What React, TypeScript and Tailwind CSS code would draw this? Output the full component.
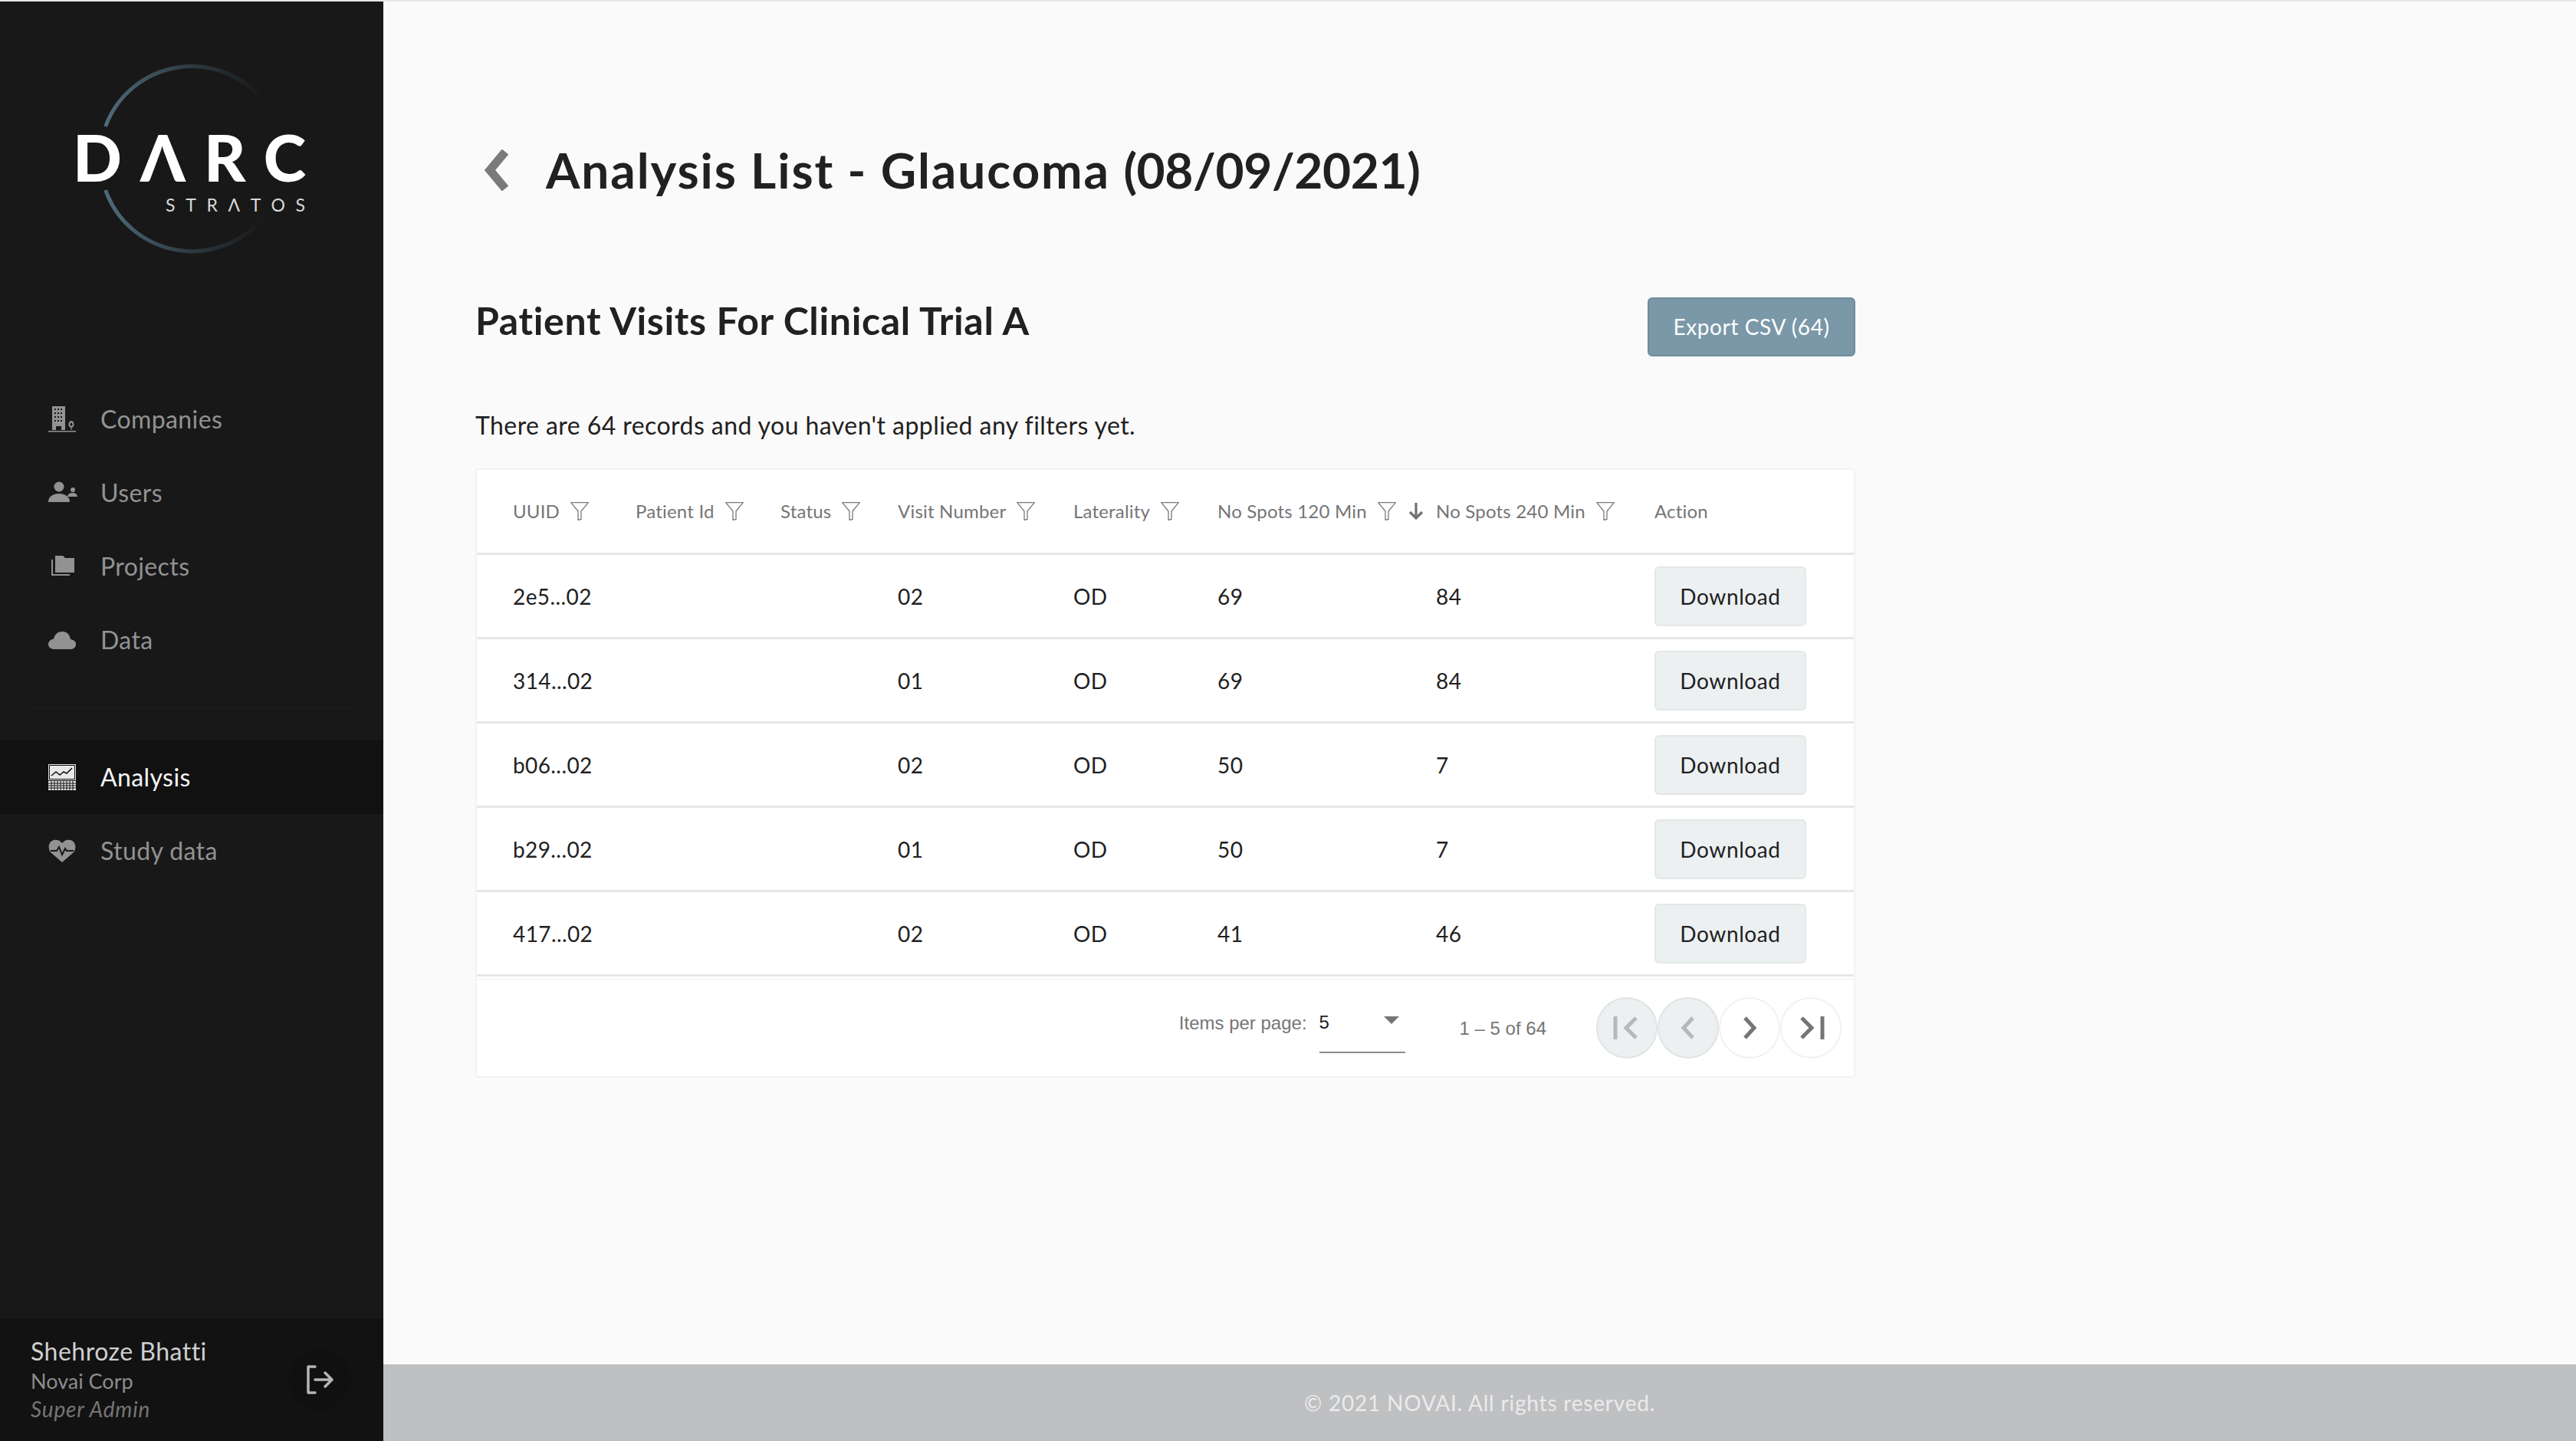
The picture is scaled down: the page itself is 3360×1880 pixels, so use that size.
import type { ReactNode } from "react";

const columns = "grid grid-cols-[160px_189px_153px_229px_188px_285px_285px_1fr] items-center pl-[47px]";

const rows = [
  ["2e5...02", "", "", "02", "OD", "69", "84"],
  ["314...02", "", "", "01", "OD", "69", "84"],
  ["b06...02", "", "", "02", "OD", "50", "7"],
  ["b29...02", "", "", "01", "OD", "50", "7"],
  ["417...02", "", "", "02", "OD", "41", "46"],
];

function Logo() {
  return (
    <svg width="500" height="340" viewBox="0 0 500 340">
      <defs>
        <linearGradient id="arc" gradientUnits="userSpaceOnUse" x1="137" y1="0" x2="345" y2="0">
          <stop offset="0" stopColor="#4f6b7a" />
          <stop offset="0.5" stopColor="#2f3d45" />
          <stop offset="1" stopColor="#181818" />
        </linearGradient>
      </defs>
      <path d="M137.6 163 A120 120 0 0 1 345 131" fill="none" stroke="url(#arc)" strokeWidth="5" />
      <path d="M137.6 246 A120 120 0 0 0 345 280" fill="none" stroke="url(#arc)" strokeWidth="5" />
      <text x="95" y="235" textLength="304" lengthAdjust="spacing" fill="#fff" fontFamily="Lato, sans-serif" fontWeight="900" fontSize="84">
        DΛRC
      </text>
      <text x="216" y="274" textLength="182" lengthAdjust="spacing" fill="#d8d8d8" fontFamily="Lato, sans-serif" fontSize="23">
        STRΛTOS
      </text>
    </svg>
  );
}

function BuildingIcon() {
  return (
    <svg width="36" height="36" viewBox="0 0 36 36" fill="currentColor">
      <path fillRule="evenodd" d="M5 1h17v31h-5v-5h-7v5H5zM8 4v2h2V4zm4 0v2h2V4zm4 0v2h2V4zM8 9v2h2V9zm4 0v2h2V9zm4 0v2h2V9zM8 14v2h2v-2zm4 0v2h2v-2zm4 0v2h2v-2zM8 19v2h2v-2zm4 0v2h2v-2zm4 0v2h2v-2z" />
      <path fillRule="evenodd" d="M30 20c2.500 0 3.500 3 3.500 5 0 2.200-1.500 3.600-2.900 3.900V32h-1.200v-3.100C28 28.600 26.500 27.200 26.500 25c0-2 1-5 3.500-5zm0 2.500c-1 0-1.500 1.500-1.500 2.500s.7 1.700 1.500 1.700 1.500-.7 1.500-1.700-.5-2.500-1.500-2.500z" />
      <rect x="0" y="33" width="36" height="1.500" />
    </svg>
  );
}

function UsersIcon() {
  return (
    <svg width="38" height="36" viewBox="0 0 38 36" fill="currentColor">
      <circle cx="14" cy="10" r="6.500" />
      <path d="M0 30c0-7 6-11 14-11s14 4 14 11z" />
      <circle cx="32" cy="14" r="3" />
      <path d="M25 23c0-3 3-5 6.500-5s6.500 2 6.500 5z" />
    </svg>
  );
}

function FoldersIcon() {
  return (
    <svg width="36" height="36" viewBox="0 0 36 36" fill="currentColor">
      <path d="M9 4h10l3 3h12v19H9z" />
      <path d="M4 9v21h24v-2H6V9z" />
    </svg>
  );
}

function CloudIcon() {
  return (
    <svg width="36" height="36" viewBox="0 0 36 36" fill="currentColor">
      <path d="M8 30c-4.500 0-8-2.500-8-6.500S3.500 17 7 16.500C8.500 10 13 7 18 7c5 0 9 2.500 10.500 8 .1 1 .2 1.500.2 2 4 .5 7.300 2.500 7.300 6.500 0 4-3 6.500-7 6.500z" />
    </svg>
  );
}

function AnalysisIcon() {
  return (
    <svg width="36" height="36" viewBox="0 0 36 36" fill="none">
      <rect x="0" y="1" width="36" height="21" fill="#e8e8e8" />
      <rect x="1.500" y="2.500" width="33" height="18" fill="none" stroke="#111" strokeWidth="1" />
      <path d="M4 16l6-5 5 4 5-4 4 2 7-7" stroke="#111" strokeWidth="1.500" />
      <path d="M0 23h36v12H0z" fill="#e8e8e8" />
      <path d="M0 26h36M0 29h36M0 32h36M4 23v12M8 23v12M12 23v12M16 23v12M20 23v12M24 23v12M28 23v12M32 23v12" stroke="#111" strokeWidth="1" />
    </svg>
  );
}

function HeartIcon() {
  return (
    <svg width="36" height="36" viewBox="0 0 36 36" fill="currentColor">
      <path d="M18 33L3 20C-1 15 0 6 7 4c4-1 8 0 11 4 3-4 7-5 11-4 7 2 8 11 4 16z" />
      <path d="M3 18h8l3-5 4 10 4-8 2 3h9" fill="none" stroke="#181818" strokeWidth="2" />
    </svg>
  );
}

function FilterIcon() {
  return (
    <svg className="shrink-0" width="24" height="24" viewBox="0 0 24 24" fill="none" stroke="#7a7a7a" strokeWidth="1.300">
      <path d="M0.700 0.700h22.600L14 12v10.500l-4 1V12z" strokeLinejoin="round" />
    </svg>
  );
}

function SortArrow() {
  return (
    <svg className="shrink-0" width="20" height="24" viewBox="0 0 20 24" fill="none" stroke="#707070" strokeWidth="3.200">
      <path d="M10 1v20M2 13l8 8 8-8" />
    </svg>
  );
}

function NavItem({ icon, label, active }: { icon: ReactNode; label: string; active?: boolean }) {
  return (
    <div
      className={
        active
          ? "flex h-[96px] items-center bg-[#111111] pl-[63px] text-[#f5f5f5]"
          : "flex h-[96px] items-center pl-[63px] text-[#929292]"
      }
    >
      <div className="flex w-[68px] shrink-0 items-center">{icon}</div>
      <span className="mb-[1px] text-[32px] tracking-[0.4px]">{label}</span>
    </div>
  );
}

function HeaderCell({ label, children }: { label: string; children?: ReactNode }) {
  return (
    <div className="flex items-center gap-[14px] text-[24px] tracking-[0.2px] whitespace-nowrap text-[#757575]">
      <span>{label}</span>
      {children}
    </div>
  );
}

function PageButton({ disabled, children }: { disabled?: boolean; children: ReactNode }) {
  return (
    <div
      className={
        disabled
          ? "flex h-[80px] w-[80px] items-center justify-center rounded-full border-2 border-[#e0e4e5] bg-[#ecf0f1]"
          : "flex h-[80px] w-[80px] items-center justify-center rounded-full border-2 border-[#f1f1f1] bg-white"
      }
    >
      {children}
    </div>
  );
}

export default function App() {
  return (
    <div className="flex h-[1880px] w-[3360px] flex-col overflow-hidden bg-[#fafafa] font-['Lato',sans-serif]">
      <div className="h-[2px] shrink-0 bg-[#e6e6ea]" />
      <div className="flex min-h-0 flex-1">
        {/* Sidebar */}
        <aside className="flex w-[500px] shrink-0 flex-col bg-[#181818]">
          <div className="h-[497px] shrink-0">
            <Logo />
          </div>
          <NavItem icon={<BuildingIcon />} label="Companies" />
          <NavItem icon={<UsersIcon />} label="Users" />
          <NavItem icon={<FoldersIcon />} label="Projects" />
          <NavItem icon={<CloudIcon />} label="Data" />
          <div className="mx-[40px] my-[41px] h-px bg-[#1f1f1f]" />
          <NavItem icon={<AnalysisIcon />} label="Analysis" active />
          <NavItem icon={<HeartIcon />} label="Study data" />
          <div className="mt-auto flex h-[160px] items-center justify-between bg-[#121212] pr-[43px] pl-[40px]">
            <div className="flex flex-col">
              <span className="mb-[2px] text-[32px] leading-[38px] tracking-[0.5px] text-[#cfcfcf]">Shehroze Bhatti</span>
              <span className="text-[27px] leading-[36px] text-[#8d8d8d]">Novai Corp</span>
              <span className="text-[28px] leading-[36px] tracking-[0.8px] text-[#757575] italic">Super Admin</span>
            </div>
            <div className="flex h-[80px] w-[80px] items-center justify-center rounded-full bg-[#101010]">
              <svg width="38" height="38" viewBox="0 0 38 38" fill="none" stroke="#b5b5b5" strokeWidth="3.500" strokeLinecap="round" strokeLinejoin="round">
                <path d="M13 2H4v34h9M13 19h22M26 10l9 9-9 9" />
              </svg>
            </div>
          </div>
        </aside>

        {/* Main */}
        <main className="flex min-w-0 flex-1 flex-col">
          <div className="flex-1 pt-[170px] pl-[120px]">
            <div className="flex h-[100px] items-center">
              <svg className="ml-[11px]" width="32" height="54" viewBox="0 0 32 54" fill="none" stroke="#7a7a7a" strokeWidth="11">
                <path d="M28 3L8 27l20 24" />
              </svg>
              <h1 className="ml-[49px] text-[64px] font-bold tracking-[1.9px] text-[#212121]">
                Analysis List - Glaucoma <span className="tracking-[-0.4px]">(08/09/2021)</span>
              </h1>
            </div>

            <div className="w-[1800px]">
              <div className="mt-[116px] flex h-[77px] items-start justify-between">
                <h2 className="text-[50px] leading-[60px] font-bold tracking-[0.65px] text-[#212121]">Patient Visits For Clinical Trial A</h2>
                <button className="flex h-[77px] w-[271px] items-center justify-center rounded-[6px] border-2 border-[#6e8c9c] bg-[#7a98a8] pb-[2px] text-[28px] tracking-[0.6px] text-white">
                  Export CSV (64)
                </button>
              </div>
              <p className="mt-[70px] text-[32px] leading-[40px] tracking-[0.43px] text-[#212121]">There are 64 records and you haven't applied any filters yet.</p>

              <div className="mt-[36px] rounded-[4px] border-2 border-[#f3f3f3] bg-white">
                <div className={`${columns} h-[111px] border-b-[3px] border-[#e6e6e6]`}>
                  <HeaderCell label="UUID"><FilterIcon /></HeaderCell>
                  <HeaderCell label="Patient Id"><FilterIcon /></HeaderCell>
                  <HeaderCell label="Status"><FilterIcon /></HeaderCell>
                  <HeaderCell label="Visit Number"><FilterIcon /></HeaderCell>
                  <HeaderCell label="Laterality"><FilterIcon /></HeaderCell>
                  <HeaderCell label="No Spots 120 Min">
                    <FilterIcon />
                    <span className="ml-[2px]"><SortArrow /></span>
                  </HeaderCell>
                  <HeaderCell label="No Spots 240 Min"><FilterIcon /></HeaderCell>
                  <HeaderCell label="Action" />
                </div>
                {rows.map((row) => (
                  <div key={row[0]} className={`${columns} h-[110px] border-b-[3px] border-[#e6e6e6] text-[28px] tracking-[0.4px] text-[#212121]`}>
                    {row.map((cell, i) => (
                      <span key={i}>{cell}</span>
                    ))}
                    <button className="h-[78px] w-[198px] rounded-[6px] border-2 border-[#e3e7e8] bg-[#ecf0f1] text-[28px] tracking-[0.6px] text-[#212121]">
                      Download
                    </button>
                  </div>
                ))}
                <div className="mt-[3px] flex h-[127px] items-center justify-end border-t border-[#f2f2f2] pr-[16px] font-['Liberation_Sans',sans-serif] text-[24px] text-[#757575]">
                  <span className="mb-[12px]">Items per page:</span>
                  <div className="relative mb-[6px] ml-[16px] h-[72px] w-[112px] border-b-2 border-[#8a8a8a] pt-[14px] text-[#212121]">
                    <span>5</span>
                    <div className="absolute top-[24px] right-[8px] h-0 w-0 border-x-[10px] border-t-[10px] border-x-transparent border-t-[#757575]" />
                  </div>
                  <span className="mt-[2px] mr-[65px] ml-[71px]">1 – 5 of 64</span>
                  <PageButton disabled>
                    <svg width="36" height="30" viewBox="0 0 36 30" fill="none" stroke="#b4b8b9" strokeWidth="5">
                      <path d="M3 0v30M30 2L17 15l13 13" />
                    </svg>
                  </PageButton>
                  <PageButton disabled>
                    <svg width="20" height="30" viewBox="0 0 20 30" fill="none" stroke="#b4b8b9" strokeWidth="5">
                      <path d="M16 2L4 15l12 13" />
                    </svg>
                  </PageButton>
                  <PageButton>
                    <svg width="20" height="30" viewBox="0 0 20 30" fill="none" stroke="#757575" strokeWidth="5">
                      <path d="M4 2l12 13L4 28" />
                    </svg>
                  </PageButton>
                  <PageButton>
                    <svg width="36" height="30" viewBox="0 0 36 30" fill="none" stroke="#757575" strokeWidth="5">
                      <path d="M33 0v30M6 2l13 13L6 28" />
                    </svg>
                  </PageButton>
                </div>
              </div>
            </div>
          </div>
          <footer className="flex h-[100px] shrink-0 items-center justify-center bg-[#bfc0c2] text-[28px] tracking-[0.8px] text-[#ebebeb]">
            © 2021 NOVAI. All rights reserved.
          </footer>
        </main>
      </div>
    </div>
  );
}
